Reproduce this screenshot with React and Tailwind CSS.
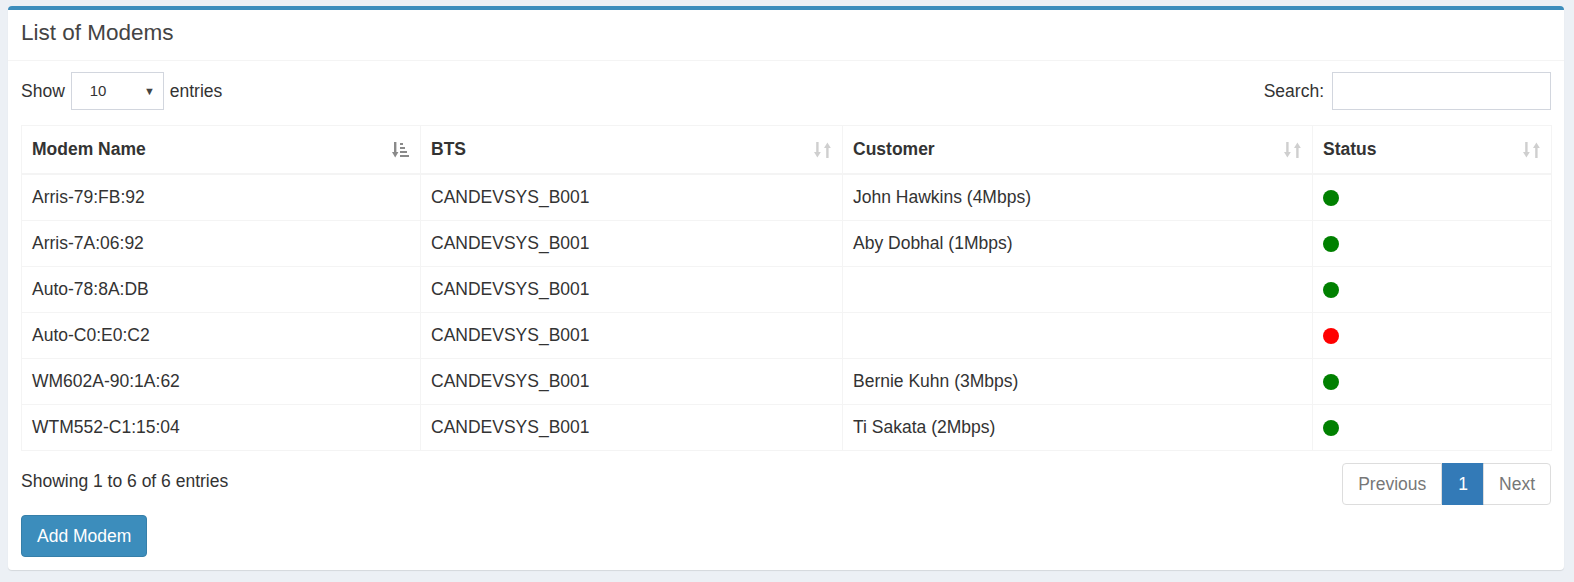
import React from 'react';

const modems = [
  { name: 'Arris-79:FB:92', bts: 'CANDEVSYS_B001', customer: 'John Hawkins (4Mbps)', online: true },
  { name: 'Arris-7A:06:92', bts: 'CANDEVSYS_B001', customer: 'Aby Dobhal (1Mbps)', online: true },
  { name: 'Auto-78:8A:DB', bts: 'CANDEVSYS_B001', customer: '', online: true },
  { name: 'Auto-C0:E0:C2', bts: 'CANDEVSYS_B001', customer: '', online: false },
  { name: 'WM602A-90:1A:62', bts: 'CANDEVSYS_B001', customer: 'Bernie Kuhn (3Mbps)', online: true },
  { name: 'WTM552-C1:15:04', bts: 'CANDEVSYS_B001', customer: 'Ti Sakata (2Mbps)', online: true },
];

function SortIcon({ active }) {
  if (active) {
    return (
      <svg width="17" height="16" viewBox="0 0 17 16" className="absolute right-[11px] top-1/2 -translate-y-1/2">
        <g fill="#8a8a8a">
          <rect x="2" y="0" width="2.4" height="11" />
          <path d="M0 10 L6.4 10 L3.2 15.5 Z" />
          <rect x="8" y="1" width="3" height="2" />
          <rect x="8" y="5" width="5" height="2" />
          <rect x="8" y="9" width="7" height="2" />
          <rect x="8" y="13" width="9" height="2" />
        </g>
      </svg>
    );
  }
  return (
    <svg width="17" height="16" viewBox="0 0 17 16" className="absolute right-[11px] top-1/2 -translate-y-1/2">
      <g fill="#cfcfcf">
        <rect x="2.2" y="0" width="2.4" height="11" />
        <path d="M0 10 L6.8 10 L3.4 15.5 Z" />
        <rect x="12.2" y="5" width="2.4" height="11" />
        <path d="M10 6 L16.8 6 L13.4 0.5 Z" />
      </g>
    </svg>
  );
}

export default function App() {
  const cols = [
    { label: 'Modem Name', w: 'w-[399px]', active: true },
    { label: 'BTS', w: 'w-[422px]' },
    { label: 'Customer', w: 'w-[470px]' },
    { label: 'Status', w: 'w-[239px]' },
  ];

  return (
    <div className="min-h-[582px] bg-[#ecf0f5] pl-[8px] pr-[10px] pt-[6px] font-['Liberation_Sans',Arial,sans-serif] text-[#333]">
      <div className="rounded-[4px] border-t-[4px] border-[#3c8dbc] bg-white shadow-[0_1px_1px_rgba(0,0,0,0.1)]">
        <div className="border-b border-[#f4f4f4] px-[13px] pb-[15px] pt-[10px]">
          <h3 className="text-[22.5px] leading-[25px] text-[#444]">List of Modems</h3>
        </div>

        <div className="px-[13px] pb-[13px] pt-[11px]">
          <div className="flex items-center justify-between">
            <div className="flex items-center text-[17.5px]">
              <span>Show</span>
              <div className="mx-[6px] flex h-[38px] w-[93px] items-center justify-between border border-[#d2d6de] pl-[18px] pr-[8px] text-[15px]">
                <span>10</span>
                <span className="text-[11px] text-[#444]">▼</span>
              </div>
              <span>entries</span>
            </div>
            <div className="flex items-center text-[17.5px]">
              <span>Search:</span>
              <div className="ml-[8px] h-[38px] w-[219px] border border-[#d2d6de]" />
            </div>
          </div>

          <table className="mt-[15px] w-[1530px] table-fixed border-collapse border border-[#f4f4f4] text-[17.5px] leading-[25px]">
            <thead>
              <tr>
                {cols.map((c) => (
                  <th
                    key={c.label}
                    className={`relative ${c.w} border border-b-[2.5px] border-[#f4f4f4] px-[10px] py-[11px] text-left font-bold`}
                  >
                    {c.label}
                    <SortIcon active={c.active} />
                  </th>
                ))}
              </tr>
            </thead>
            <tbody>
              {modems.map((m) => (
                <tr key={m.name}>
                  <td className="border border-[#f4f4f4] px-[10px] py-[10px]">{m.name}</td>
                  <td className="border border-[#f4f4f4] px-[10px] py-[10px]">{m.bts}</td>
                  <td className="border border-[#f4f4f4] px-[10px] py-[10px]">{m.customer}</td>
                  <td className="border border-[#f4f4f4] px-[10px] py-[10px]">
                    <span
                      className={`block h-[16px] w-[16px] rounded-full ${m.online ? 'bg-[#008000]' : 'bg-[#ff0000]'}`}
                    />
                  </td>
                </tr>
              ))}
            </tbody>
          </table>

          <div className="mt-[12px] flex items-start justify-between">
            <div className="pt-[6px] text-[17.5px] leading-[25px]">Showing 1 to 6 of 6 entries</div>
            <div className="flex text-[17.5px] leading-[25px]">
              <span className="rounded-l-[4px] border border-[#ddd] px-[15px] py-[7.5px] text-[#777]">Previous</span>
              <span className="border border-[#337ab7] bg-[#337ab7] px-[15px] py-[7.5px] text-white">1</span>
              <span className="-ml-px rounded-r-[4px] border border-[#ddd] px-[15px] py-[7.5px] text-[#777]">Next</span>
            </div>
          </div>

          <button className="mt-[10px] rounded-[4px] border border-[#367fa9] bg-[#3c8dbc] px-[15px] py-[7.5px] text-[17.5px] leading-[25px] text-white">
            Add Modem
          </button>
        </div>
      </div>
    </div>
  );
}
